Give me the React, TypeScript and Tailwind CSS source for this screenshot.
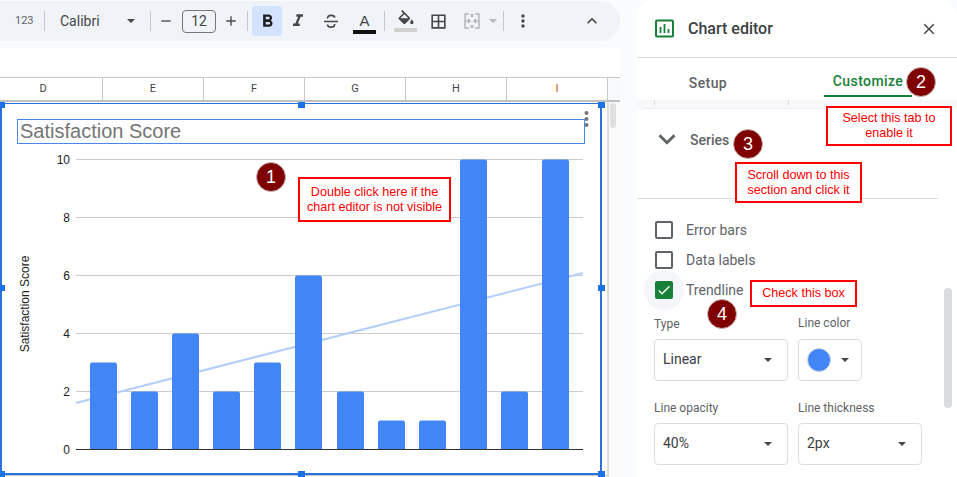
import React from "react";
import { MdFormatBold, MdFormatItalic, MdBorderAll, MdClose, MdCheck, MdKeyboardArrowDown, MdKeyboardArrowUp, MdMoreVert, MdAdd, MdRemove } from "react-icons/md";

const Sep = ({ className }: { className: string }) => <div className={`h-[20px] w-px bg-[#c7c7c7] shrink-0 ${className}`} />;
const Caret = ({ className = "", color = "border-t-[#444746]" }: { className?: string; color?: string }) => (
  <div className={`w-0 h-0 shrink-0 border-l-[4px] border-r-[4px] border-t-[4px] border-l-transparent border-r-transparent ${color} ${className}`} />
);

function Toolbar() {
  return (
    <div className="mt-px h-[40px] w-[620px] shrink-0 rounded-r-[20px] bg-[#f0f4f9] flex items-center text-[#444746] font-['Roboto',sans-serif]">
      <span className="ml-[15px] w-[18px] text-[11px] text-[#5f6368] shrink-0">123</span>
      <Sep className="ml-[11px]" />
      <span className="ml-[15px] w-[42px] text-[14px] shrink-0">Calibri</span>
      <Caret className="ml-[25px]" />
      <Sep className="ml-[15px]" />
      <MdRemove className="ml-[7px] shrink-0" size={16} />
      <div className="ml-[8px] w-[34px] h-[23px] shrink-0 rounded-[4px] border border-[#747775] flex items-center justify-center text-[14px]">12</div>
      <MdAdd className="ml-[7px] shrink-0" size={16} />
      <Sep className="ml-[8px]" />
      <div className="ml-[4px] w-[30px] h-[30px] shrink-0 rounded-[4px] bg-[#d3e3fd] flex items-center justify-center text-[#1f1f1f]">
        <MdFormatBold size={21} />
      </div>
      <MdFormatItalic className="ml-[6px] shrink-0" size={20} />
      <svg viewBox="0 0 20 20" className="ml-[13px] w-[20px] h-[20px] shrink-0" fill="none" stroke="#444746" strokeWidth="1.6">
        <path d="M3 10.5h14M6.5 7.5c0-4 7-4 7.2-.8M6.5 13.5c.2 3.6 7.2 3.6 7.2-.6" />
      </svg>
      <div className="ml-[12px] w-[23px] shrink-0 flex flex-col items-center pt-[3px]">
        <span className="text-[15px] leading-[17px] font-['Liberation_Sans',sans-serif]">A</span>
        <div className="w-[23px] h-[4px] bg-[#111] mt-px" />
      </div>
      <Sep className="ml-[8px]" />
      <div className="ml-[9px] w-[23px] shrink-0 flex flex-col items-center">
        <svg viewBox="0 0 24 18" className="w-[20px] h-[15px]" fill="#444746">
          <path d="M16.56 8.94L7.62 0 6.21 1.41l2.38 2.38-5.15 5.15c-.59.59-.59 1.54 0 2.12l5.5 5.5c.29.29.68.44 1.06.44s.77-.15 1.06-.44l5.5-5.5c.59-.58.59-1.53 0-2.12zM5.21 10L10 5.21 14.79 10H5.21zM19 11.5s-2 2.17-2 3.5c0 1.1.9 2 2 2s2-.9 2-2c0-1.33-2-3.5-2-3.5z" />
        </svg>
        <div className="w-[23px] h-[4px] bg-[#d0d0d0] mt-[3px]" />
      </div>
      <MdBorderAll className="ml-[12px] shrink-0" size={19} />
      <svg viewBox="0 0 16 16" className="ml-[16px] w-[16px] h-[16px] shrink-0" fill="none" stroke="#b4b8bb" strokeWidth="1.5">
        <path d="M5 1H1v14h4M11 1h4v14h-4M1 8h5M4 6l2 2-2 2M15 8h-5M12 6l-2 2 2 2M7.5 1v3M8.5 1v3M7.5 12v3M8.5 12v3" />
      </svg>
      <Caret className="ml-[9px]" color="border-t-[#b4b8bb]" />
      <Sep className="ml-[6px]" />
      <MdMoreVert className="ml-[9px] shrink-0" size={20} />
      <MdKeyboardArrowUp className="ml-[49px] shrink-0" size={20} />
    </div>
  );
}

const values = [3, 2, 4, 2, 3, 6, 2, 1, 1, 10, 2, 10];
const barX = [90, 131, 172, 213, 254, 295, 337, 378, 419, 460, 501, 542];

function ChartSvg() {
  const y = (v: number) => 449 - v * 29;
  return (
    <svg viewBox="2 104 598 369" className="w-[598px] h-[369px] block">
      {[2, 4, 6, 8, 10].map((v) => (
        <line key={v} x1="76" x2="583" y1={y(v) + 0.5} y2={y(v) + 0.5} stroke="#cccccc" />
      ))}
      <line x1="76" y1="403" x2="583" y2="273" stroke="#b3cefb" strokeWidth="2" />
      {values.map((v, i) => (
        <path key={i} d={`M${barX[i]} 449.5V${y(v) + 2}l1.5 -1.5H${barX[i] + 25.5}l1.5 1.5V449.5Z`} fill="#4285f4" />
      ))}
      <line x1="76" x2="583" y1="449.5" y2="449.5" stroke="#333333" />
      {[0, 2, 4, 6, 8, 10].map((v) => (
        <text key={v} x="70" y={y(v) + 4.5} textAnchor="end" fontSize="12" fill="#222222" fontFamily="Liberation Sans">{v}</text>
      ))}
      <text transform="translate(29 304) rotate(-90)" textAnchor="middle" fontSize="12" fill="#222222" fontFamily="Liberation Sans">Satisfaction Score</text>
      <circle cx="586.5" cy="113" r="2" fill="#757575" />
      <circle cx="586.5" cy="119" r="2" fill="#757575" />
      <circle cx="586.5" cy="125" r="2" fill="#757575" />
    </svg>
  );
}

const Handle = ({ className }: { className: string }) => <div className={`absolute w-[7px] h-[6px] bg-[#1a73e8] ${className}`} />;

function Sheet() {
  return (
    <div className="flex flex-col w-[620px] shrink-0">
      <Toolbar />
      <div className="mt-[7px] h-[29px] bg-white border-b border-[#c7c7c7] box-content" />
      <div className="flex h-[24px] bg-white border-b-2 border-[#c0c0c0] text-[11px] text-[#444] font-['Roboto',sans-serif]">
        {[["D", 103, "pr-[16px]"], ["E", 101, ""], ["F", 101, ""], ["G", 101, ""], ["H", 101, ""], ["I", 101, "text-[#c2570c]"]].map(([n, w, c]) => (
          <div key={n as string} style={{ width: w as number }} className={`flex items-center justify-center border-r border-[#c7c7c7] ${c}`}>{n}</div>
        ))}
        <div className="flex-1 bg-[#f8f9fa]" />
      </div>
      <div className="flex bg-white flex-1 min-h-0">
        <div className="relative w-[607px] shrink-0">
          <div className="relative mt-px w-[602px] h-[372px] border-2 border-t border-[#2a73dc] box-border overflow-hidden">
            <div className="absolute left-[15px] top-[15px] w-[568px] h-[25px] border border-[#4a86e8] text-[20px] leading-[23px] pl-[2px] text-[#757575] font-['Liberation_Sans',sans-serif]">Satisfaction Score</div>
            <ChartSvg />
          </div>
          <div className="h-px bg-[#c7c7c7]" />
          <Handle className="left-[-2px] top-0" />
          <Handle className="left-[298px] top-0" />
          <Handle className="left-[598px] top-0" />
          <Handle className="left-[-2px] top-[183px]" />
          <Handle className="left-[598px] top-[183px]" />
          <Handle className="left-[-2px] top-[369px]" />
          <Handle className="left-[298px] top-[369px]" />
          <Handle className="left-[598px] top-[369px]" />
        </div>
        <div className="flex-1 border-l-2 border-[#dcdcdc] pl-[1px] pt-px bg-[#fbfbfb]">
          <div className="w-[6px] h-[25px] rounded-[3px] bg-[#e0e0e0]" />
        </div>
      </div>
    </div>
  );
}

const Check = ({ label, checked }: { label: string; checked?: boolean }) => (
  <div className="flex items-center h-[30px] pl-[18px] relative">
    {checked && <div className="absolute left-[7px] top-[-5px] w-[40px] h-[40px] rounded-full bg-[#f4f6f9]" />}
    {checked ? (
      <div className="relative w-[18px] h-[18px] rounded-[2px] bg-[#188038] flex items-center justify-center text-white"><MdCheck size={16} /></div>
    ) : (
      <div className="relative w-[18px] h-[18px] rounded-[2px] border-2 border-[#5f6368]" />
    )}
    <span className="relative ml-[13px] text-[14px] text-[#5f6368]">{label}</span>
  </div>
);

const Select = ({ text, className }: { text: string; className: string }) => (
  <div className={`h-[42px] rounded-[4px] border border-[#dadce0] flex items-center justify-between pl-[8px] pr-[15px] text-[14px] text-[#3c4043] ${className}`}>
    <span className="-mt-px">{text}</span>
    <Caret />
  </div>
);

function Editor() {
  return (
    <div className="ml-[17px] w-[320px] h-[477px] bg-white rounded-t-[16px] flex flex-col overflow-hidden font-['Roboto',sans-serif]">
      <div className="h-[57px] shrink-0 border-b border-[#dadce0] flex items-center pl-[18px] pr-[19px] box-content">
        <svg viewBox="0 0 20 20" className="w-[20px] h-[20px] shrink-0" fill="none">
          <rect x="1" y="1.5" width="17" height="16" rx="1" stroke="#188038" strokeWidth="2" />
          <path d="M5.5 8v6M9.5 5v9M13.5 10v4" stroke="#188038" strokeWidth="1.8" />
        </svg>
        <span className="ml-[13px] text-[16px] text-[#3c4043] font-medium flex-1">Chart editor</span>
        <MdClose size={18} className="text-[#444746]" />
      </div>
      <div className="flex h-[42px] shrink-0 text-[14px] font-medium">
        <div className="w-[142px] flex items-center justify-center text-[#5f6368] tracking-[0.4px] pt-[8px]">Setup</div>
        <div className="ml-[45px] w-[88px] relative flex items-center justify-center text-[#188038] tracking-[0.4px] border-b-[2px] border-[#188038] mb-[3px] pt-[9px]">Customize</div>
      </div>
      <div className="h-[8px] shrink-0 bg-[#f7f8f9] flex">
        <div className="ml-[17px] w-px h-[5px] bg-[#dadce0]" />
        <div className="ml-[133px] w-px h-[5px] bg-[#dadce0]" />
      </div>
      <div className="flex flex-1 min-h-0">
        <div className="w-[302px] shrink-0 rounded-tl-[8px] border-t border-[#eceef1]">
          <div className="h-[90px] flex items-start pt-[13px] border-b border-[#dadce0] mr-[1px]">
            <MdKeyboardArrowDown size={34} className="ml-[13px] text-[#5f6368]" />
            <span className="ml-[6px] mt-[8px] text-[14px] font-medium text-[#5f6368]">Series</span>
          </div>
          <div className="pt-[16px]">
            <Check label="Error bars" />
            <Check label="Data labels" />
            <Check label="Trendline" checked />
          </div>
          <div className="flex pl-[17px] pt-[12px] gap-[10px]">
            <div className="w-[134px]">
              <div className="text-[12px] text-[#5f6368] leading-[14px] mb-[8px]">Type</div>
              <Select text="Linear" className="w-[134px]" />
            </div>
            <div>
              <div className="text-[12px] text-[#5f6368] leading-[14px] mb-[8px] -mt-px pb-px">Line color</div>
              <div className="w-[64px] h-[42px] rounded-[4px] border border-[#dadce0] flex items-center pl-[8px]">
                <div className="w-[24px] h-[24px] rounded-full bg-[#4285f4] border border-[#d5d9e0]" />
                <Caret className="ml-[10px]" />
              </div>
            </div>
          </div>
          <div className="flex pl-[17px] pt-[20px] gap-[10px]">
            <div className="w-[134px]">
              <div className="text-[12px] text-[#5f6368] leading-[14px] mb-[8px]">Line opacity</div>
              <Select text="40%" className="w-[134px]" />
            </div>
            <div>
              <div className="text-[12px] text-[#5f6368] leading-[14px] mb-[8px]">Line thickness</div>
              <Select text="2px" className="w-[124px]" />
            </div>
          </div>
        </div>
        <div className="ml-[5px] mt-[180px] w-[8px] h-[120px] rounded-[4px] bg-[#dadce0]" />
      </div>
    </div>
  );
}

const Num = ({ n, className }: { n: string; className: string }) => (
  <div className={`absolute w-[30px] h-[30px] rounded-full bg-[#800000] border border-[#c9b5b5] text-white text-[18px] flex items-center justify-center ${className}`}>{n}</div>
);
const Note = ({ children, className }: { children: React.ReactNode; className: string }) => (
  <div className={`absolute border-2 border-[#ff0000] bg-white text-[#ff0000] text-[12.6px] leading-[15px] text-center flex items-center justify-center ${className}`}>{children}</div>
);

export default function App() {
  return (
    <div className="relative w-[957px] h-[477px] overflow-hidden bg-[#f9fbfd] flex font-['Liberation_Sans',sans-serif]">
      <Sheet />
      <Editor />
      <Num n="1" className="left-[256px] top-[162px]" />
      <Num n="2" className="left-[906px] top-[67px]" />
      <Num n="3" className="left-[733px] top-[129px]" />
      <Num n="4" className="left-[707px] top-[299px]" />
      <Note className="left-[298px] top-[177px] w-[153px] h-[45px]">Double click here if the<br />chart editor is not visible</Note>
      <Note className="left-[826px] top-[106px] w-[126px] h-[40px]">Select this tab to<br />enable it</Note>
      <Note className="left-[735px] top-[162px] w-[127px] h-[41px]">Scroll down to this<br />section and click it</Note>
      <Note className="left-[750px] top-[280px] w-[107px] h-[27px]">Check this box</Note>
    </div>
  );
}
